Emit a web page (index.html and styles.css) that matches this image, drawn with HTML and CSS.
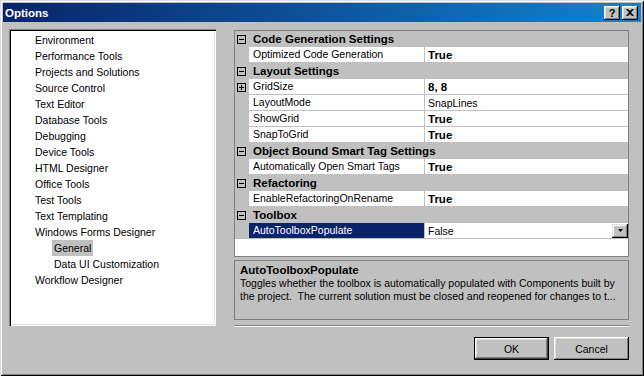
FILE: index.html
```html
<!DOCTYPE html>
<html lang="en">
<head>
    <meta charset="UTF-8">
    <title>Options</title>
    <link rel="stylesheet" href="styles.css">
</head>
<body>
    <div class="window">
        <div class="titlebar">
            <span class="title">Options</span>
            <div class="caption-buttons">
                <span class="caption-btn help">?</span>
                <span class="caption-btn">
                    <svg width="8" height="7" viewBox="0 0 8 7">
                        <path d="M0 0 L2 0 L4 2 L6 0 L8 0 L5 3.5 L8 7 L6 7 L4 5 L2 7 L0 7 L3 3.5 Z" fill="#000"/>
                    </svg>
                </span>
            </div>
        </div>

        <div class="client">
            <!-- Arvore de categorias -->
            <div class="tree">
                <div class="tree-item">Environment</div>
                <div class="tree-item">Performance Tools</div>
                <div class="tree-item">Projects and Solutions</div>
                <div class="tree-item">Source Control</div>
                <div class="tree-item">Text Editor</div>
                <div class="tree-item">Database Tools</div>
                <div class="tree-item">Debugging</div>
                <div class="tree-item">Device Tools</div>
                <div class="tree-item">HTML Designer</div>
                <div class="tree-item">Office Tools</div>
                <div class="tree-item">Test Tools</div>
                <div class="tree-item">Text Templating</div>
                <div class="tree-item">Windows Forms Designer</div>
                <div class="tree-item child"><span class="label selected">General</span></div>
                <div class="tree-item child"><span class="label">Data UI Customization</span></div>
                <div class="tree-item">Workflow Designer</div>
            </div>

            <div class="right">
                <!-- Grade de propriedades -->
                <div class="propgrid">
                    <div class="category">
                        <span class="margin"><svg class="toggle" width="9" height="9" viewBox="0 0 9 9"><rect x="0.5" y="0.5" width="8" height="8" fill="none" stroke="#000"/><path d="M2 4.5 H7" stroke="#000"/></svg></span>
                        <span class="cat-name">Code Generation Settings</span>
                    </div>
                    <div class="prop">
                        <span class="margin"></span>
                        <span class="name">Optimized Code Generation</span>
                        <span class="value strong">True</span>
                    </div>

                    <div class="category">
                        <span class="margin"><svg class="toggle" width="9" height="9" viewBox="0 0 9 9"><rect x="0.5" y="0.5" width="8" height="8" fill="none" stroke="#000"/><path d="M2 4.5 H7" stroke="#000"/></svg></span>
                        <span class="cat-name">Layout Settings</span>
                    </div>
                    <div class="prop">
                        <span class="margin"><svg class="toggle" width="9" height="9" viewBox="0 0 9 9"><rect x="0.5" y="0.5" width="8" height="8" fill="none" stroke="#000"/><path d="M2 4.5 H7 M4.5 2 V7" stroke="#000"/></svg></span>
                        <span class="name">GridSize</span>
                        <span class="value strong">8, 8</span>
                    </div>
                    <div class="prop">
                        <span class="margin"></span>
                        <span class="name">LayoutMode</span>
                        <span class="value">SnapLines</span>
                    </div>
                    <div class="prop">
                        <span class="margin"></span>
                        <span class="name">ShowGrid</span>
                        <span class="value strong">True</span>
                    </div>
                    <div class="prop">
                        <span class="margin"></span>
                        <span class="name">SnapToGrid</span>
                        <span class="value strong">True</span>
                    </div>

                    <div class="category">
                        <span class="margin"><svg class="toggle" width="9" height="9" viewBox="0 0 9 9"><rect x="0.5" y="0.5" width="8" height="8" fill="none" stroke="#000"/><path d="M2 4.5 H7" stroke="#000"/></svg></span>
                        <span class="cat-name">Object Bound Smart Tag Settings</span>
                    </div>
                    <div class="prop">
                        <span class="margin"></span>
                        <span class="name">Automatically Open Smart Tags</span>
                        <span class="value strong">True</span>
                    </div>

                    <div class="category">
                        <span class="margin"><svg class="toggle" width="9" height="9" viewBox="0 0 9 9"><rect x="0.5" y="0.5" width="8" height="8" fill="none" stroke="#000"/><path d="M2 4.5 H7" stroke="#000"/></svg></span>
                        <span class="cat-name">Refactoring</span>
                    </div>
                    <div class="prop">
                        <span class="margin"></span>
                        <span class="name">EnableRefactoringOnRename</span>
                        <span class="value strong">True</span>
                    </div>

                    <div class="category">
                        <span class="margin"><svg class="toggle" width="9" height="9" viewBox="0 0 9 9"><rect x="0.5" y="0.5" width="8" height="8" fill="none" stroke="#000"/><path d="M2 4.5 H7" stroke="#000"/></svg></span>
                        <span class="cat-name">Toolbox</span>
                    </div>
                    <div class="prop selected">
                        <span class="margin"></span>
                        <span class="name">AutoToolboxPopulate</span>
                        <span class="value">False
                            <span class="dropdown">
                                <svg width="5" height="3" viewBox="0 0 5 3"><path d="M0 0 H5 L2.5 3 Z" fill="#000"/></svg>
                            </span>
                        </span>
                    </div>
                </div>

                <!-- Descricao da propriedade -->
                <div class="desc">
                    <div class="desc-title">AutoToolboxPopulate</div>
                    <div class="desc-text">Toggles whether the toolbox is automatically populated with Components built by
the project.  The current solution must be closed and reopened for changes to t...</div>
                </div>

                <div class="separator"></div>

                <div class="buttons">
                    <button class="btn btn-default">OK</button>
                    <button class="btn">Cancel</button>
                </div>
            </div>
        </div>
    </div>
</body>
</html>
```

FILE: styles.css
```css
body {
    margin: 0;
    padding: 0;
    font-family: "Liberation Sans", Arial, sans-serif;
    font-size: 10.5px;
    color: #000;
    background-color: #c0c0c0;
}
.window {
    width: 644px;
    height: 376px;
    box-sizing: border-box;
    padding: 3px;
    background-color: #c0c0c0;
    box-shadow: inset 1px 1px #dfdfdf, inset -1px -1px #000, inset 2px 2px #fff, inset -2px -2px #808080;
    display: flex;
    flex-direction: column;
}
.titlebar {
    height: 19px;
    flex: none;
    background: linear-gradient(to right, #0a246a, #1084d0);
    color: white;
    display: flex;
    justify-content: space-between;
    align-items: center;
    padding: 0 3px 0 2px;
}
.title {
    font-weight: bold;
    font-size: 11.5px;
}
.caption-buttons {
    display: flex;
    gap: 2px;
}
.caption-btn {
    width: 16px;
    height: 14px;
    box-sizing: border-box;
    background-color: #c0c0c0;
    box-shadow: inset -1px -1px #000, inset 1px 1px #fff, inset -2px -2px #808080, inset 2px 2px #dfdfdf;
    display: flex;
    justify-content: center;
    align-items: center;
    color: #000;
}
.caption-btn.help {
    font-weight: bold;
    font-size: 11px;
    line-height: 14px;
}
.client {
    display: flex;
    gap: 18px;
    padding: 7px 0 0 6px;
}
.tree {
    width: 207px;
    height: 297px;
    box-sizing: border-box;
    flex: none;
    background-color: white;
    box-shadow: inset 1px 1px #808080, inset 2px 2px #000, inset -1px -1px #fff, inset -2px -2px #dfdfdf;
    padding: 3px 0 0 2px;
}
.tree-item {
    height: 16px;
    line-height: 16px;
    padding-left: 24px;
    white-space: nowrap;
}
.tree-item.child {
    padding-left: 41px;
}
.tree-item .label {
    display: inline-block;
    padding: 0 2px;
}
.tree-item .label.selected {
    background-color: #c0c0c0;
}
.right {
    width: 395px;
    margin-top: 1px;
    display: flex;
    flex-direction: column;
}
.propgrid {
    height: 227px;
    box-sizing: border-box;
    border: 1px solid #808080;
    background-color: white;
}
.category {
    height: 16px;
    display: flex;
    align-items: center;
    background-color: #c0c0c0;
    font-weight: bold;
    font-size: 11.5px;
    white-space: nowrap;
}
.margin {
    width: 14px;
    flex: none;
    box-sizing: border-box;
    padding-left: 2px;
    display: flex;
    align-items: center;
}
.cat-name {
    padding-left: 4px;
}
.prop {
    height: 16px;
    display: flex;
}
.prop .margin {
    background-color: #c0c0c0;
}
.name {
    width: 176px;
    flex: none;
    box-sizing: border-box;
    padding-left: 4px;
    line-height: 15px;
    border-right: 1px solid #c0c0c0;
    border-bottom: 1px solid #c0c0c0;
    white-space: nowrap;
}
.value {
    flex: 1;
    display: flex;
    align-items: center;
    padding-left: 3px;
    height: 16px;
    box-sizing: border-box;
    border-bottom: 1px solid #c0c0c0;
    white-space: nowrap;
}
.value.strong {
    font-weight: bold;
    font-size: 11.5px;
}
.prop.selected .name {
    background-color: #0a246a;
    color: white;
}
.dropdown {
    margin-left: auto;
    width: 16px;
    height: 14px;
    box-sizing: border-box;
    background-color: #c0c0c0;
    box-shadow: inset -1px -1px #000, inset 1px 1px #dfdfdf, inset -2px -2px #808080, inset 2px 2px #fff;
    display: flex;
    justify-content: center;
    align-items: center;
}
.desc {
    margin-top: 3px;
    height: 60px;
    box-sizing: border-box;
    border: 1px solid #808080;
    padding: 3px 5px;
    overflow: hidden;
}
.desc-title {
    font-weight: bold;
    font-size: 11.5px;
    line-height: 13px;
}
.desc-text {
    line-height: 13px;
    white-space: pre;
}
.separator {
    margin-top: 5px;
    border-top: 1px solid #808080;
    border-bottom: 1px solid #fff;
}
.buttons {
    margin-top: 10px;
    display: flex;
    justify-content: flex-end;
    gap: 5px;
}
.btn {
    width: 75px;
    height: 23px;
    box-sizing: border-box;
    margin: 0;
    padding: 0;
    border: none;
    font: inherit;
    color: #000;
    background-color: #c0c0c0;
    box-shadow: inset -1px -1px #000, inset 1px 1px #fff, inset -2px -2px #808080, inset 2px 2px #dfdfdf;
}
.btn-default {
    border: 1px solid #000;
    box-shadow: inset -1px -1px #404040, inset 1px 1px #fff, inset -2px -2px #808080, inset 2px 2px #dfdfdf;
}
```
